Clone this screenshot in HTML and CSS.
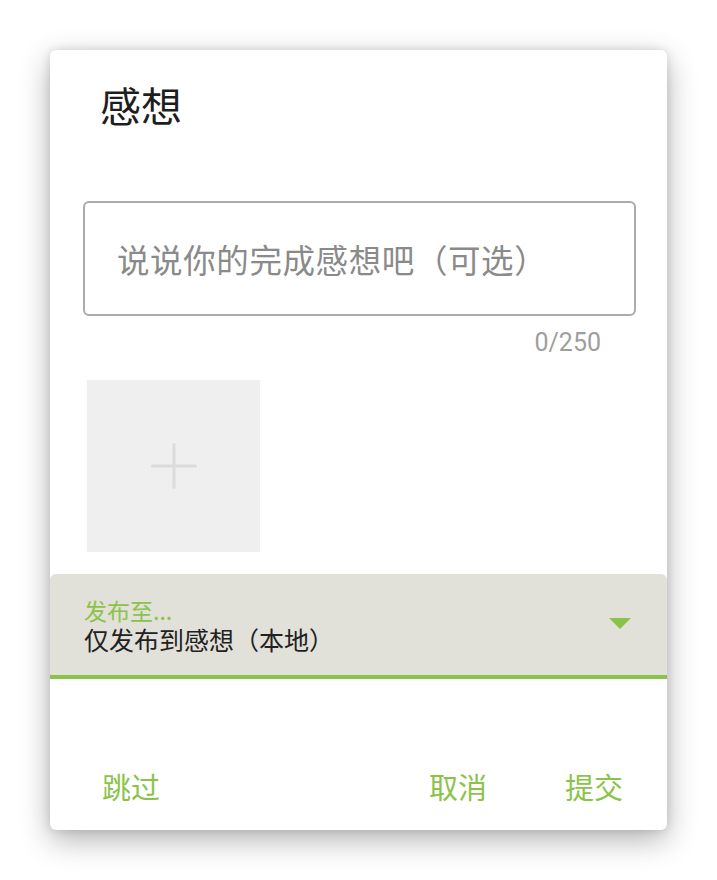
FILE: index.html
```html
<!DOCTYPE html>
<html lang="zh-CN">
<head>
<meta charset="utf-8">
<link rel="stylesheet" href="styles.css">
</head>
<body>
<div class="dialog">
  <div class="title">感想</div>
  <div class="field"><span class="placeholder">说说你的完成感想吧（可选）</span></div>
  <div class="counter">0/250</div>
  <div class="photo">
    <svg width="46" height="46" viewBox="0 0 46 46"><path d="M23 1.5V44.5M1.5 23H44.5" stroke="#dcdcdc" stroke-width="3" stroke-linecap="round"/></svg>
  </div>
  <div class="publish">
    <div class="publish-text">
      <div class="publish-label">发布至...</div>
      <div class="publish-value">仅发布到感想（本地）</div>
    </div>
    <svg class="caret" width="22" height="11" viewBox="0 0 22 11"><path d="M0 0H22L11 11Z" fill="#8bc34a"/></svg>
  </div>
  <div class="actions">
    <span class="btn">跳过</span>
    <span class="spacer"></span>
    <span class="btn">取消</span>
    <span class="btn">提交</span>
  </div>
</div>
</body>
</html>
```

FILE: styles.css
```css
html, body {
  margin: 0;
  padding: 0;
  background: #ffffff;
}
body {
  font-family: "Noto Sans CJK SC", "Noto Sans", sans-serif;
  padding: 50px 0 50px 50px;
}
.dialog {
  width: 617px;
  height: 780px;
  background: #ffffff;
  border-radius: 6px;
  box-shadow: 0 10px 30px rgba(0, 0, 0, 0.3), 0 0 10px rgba(0, 0, 0, 0.12);
  display: flex;
  flex-direction: column;
  overflow: hidden;
}
.title {
  margin: 30px 0 0 50px;
  font-size: 41px;
  line-height: 48px;
  font-weight: 400;
  color: #1e1e1e;
}
.field {
  margin: 73px 31px 0 33px;
  height: 115px;
  box-sizing: border-box;
  border: 2px solid #ababab;
  border-radius: 6px;
  display: flex;
  align-items: center;
  padding-left: 32px;
}
.placeholder {
  font-size: 32.5px;
  line-height: 40px;
  letter-spacing: 0.6px;
  color: #8a8a8a;
}
.counter {
  margin-top: 13px;
  padding-right: 66px;
  text-align: right;
  font-family: Roboto, "Noto Sans", sans-serif;
  font-size: 25px;
  line-height: 28px;
  color: #9e9e9e;
}
.photo {
  margin: 23px 0 0 37px;
  width: 173px;
  height: 172px;
  background: #efefef;
  display: flex;
  align-items: center;
  justify-content: center;
}
.publish {
  margin-top: 22px;
  height: 101px;
  background: #e1e0d9;
  border-radius: 6px 6px 0 0;
  border-bottom: 4px solid #8bc34a;
  display: flex;
  align-items: center;
  padding: 0 36px 0 34px;
}
.publish-text {
  flex: 1;
  padding-top: 3px;
  display: flex;
  flex-direction: column;
  gap: 1px;
}
.publish-label {
  font-size: 23px;
  line-height: 25px;
  color: #8bc34a;
}
.publish-value {
  font-size: 25px;
  line-height: 30px;
  color: #212121;
}
.caret {
  display: block;
  margin-bottom: 2px;
}
.actions {
  margin-top: auto;
  display: flex;
  align-items: center;
  padding: 0 44px 29px 52px;
  gap: 78px;
}
.spacer {
  flex: 1;
}
.btn {
  font-size: 29px;
  line-height: 30px;
  color: #8bc34a;
}
.actions .spacer + .btn {
  margin-left: -78px;
}
```
